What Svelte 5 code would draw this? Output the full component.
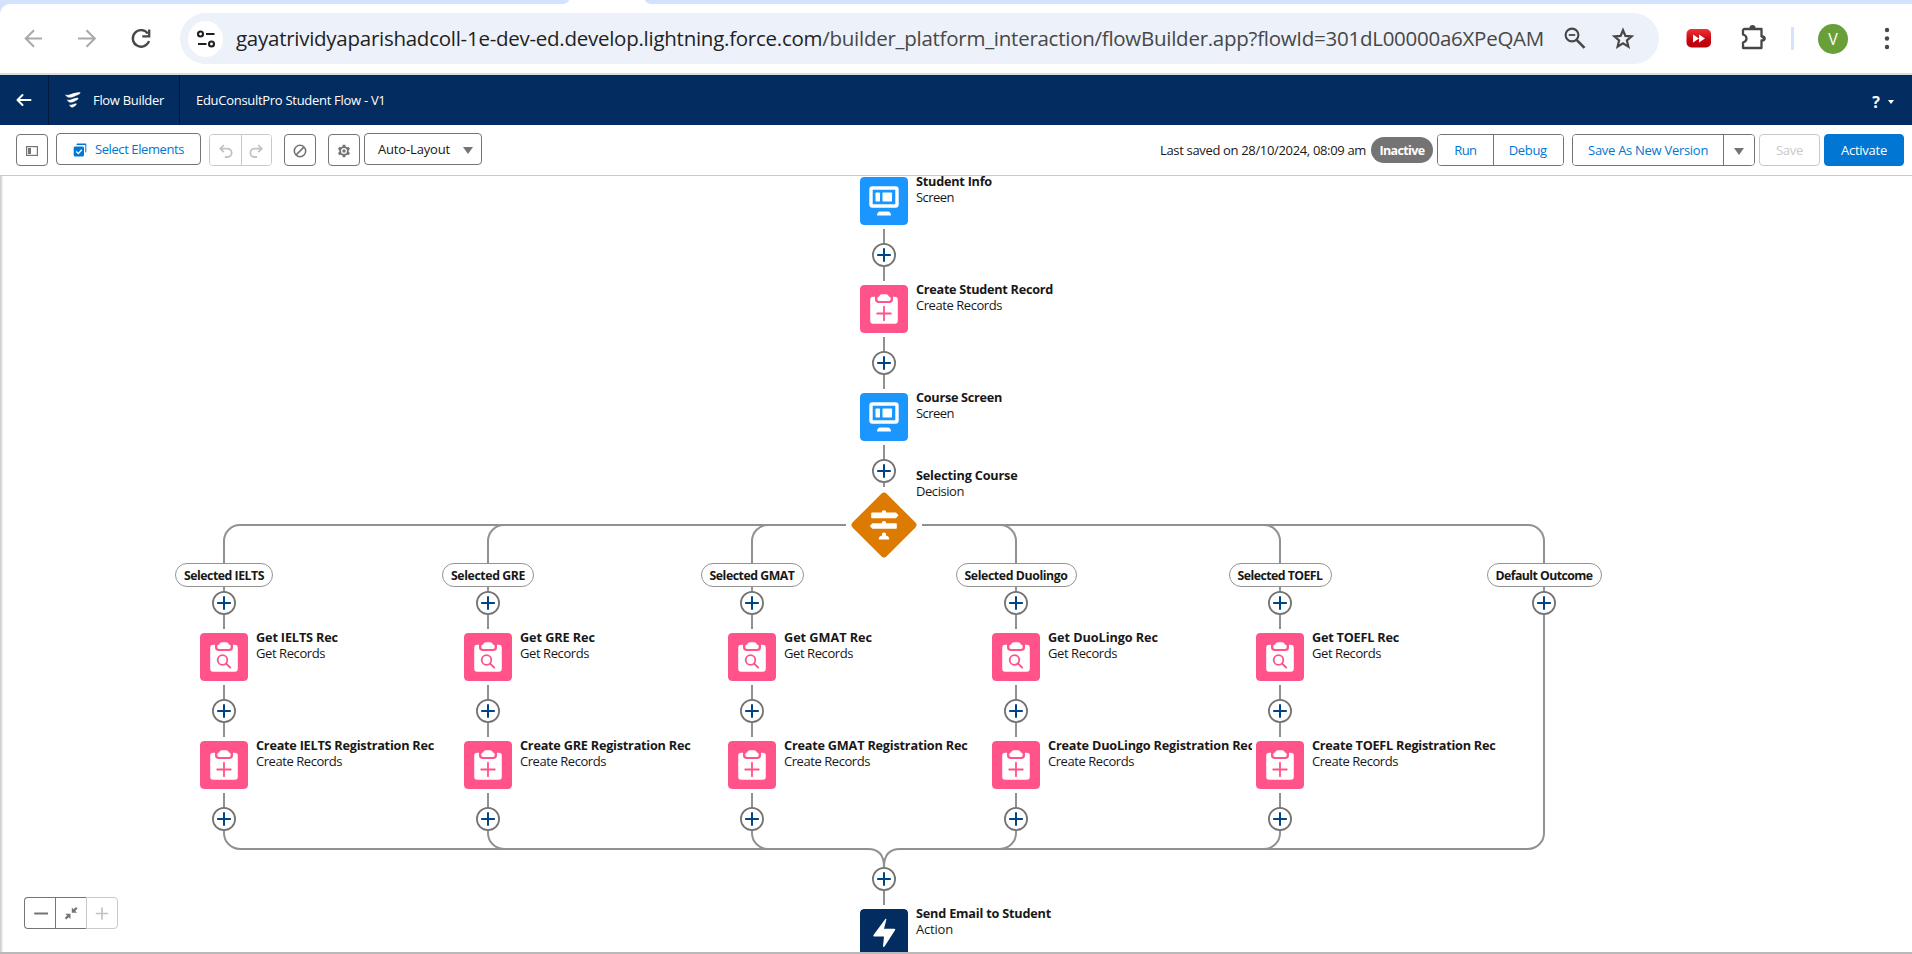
<script>
  // Spreads a label's letters so that it fills a set width in pixels.
  function fit(el, width) {
    const n = el.textContent.length;
    const natural = el.getBoundingClientRect().width;
    el.style.letterSpacing = `${(width - natural) / n}px`;
  }

  const trunk = [
    { x: 884, y: 177, kind: 'screen', title: 'Student Info', tw: 76, sub: 'Screen', sw: 38 },
    { x: 884, y: 285, kind: 'create', title: 'Create Student Record', tw: 137, sub: 'Create Records', sw: 86 },
    { x: 884, y: 393, kind: 'screen', title: 'Course Screen', tw: 86, sub: 'Screen', sw: 38 },
    { x: 884, y: 909, kind: 'action', title: 'Send Email to Student', tw: 135, sub: 'Action', sw: 37 }
  ];

  const branches = [
    { x: 224, label: 'Selected IELTS', w: 98, lw: 80, get: 'Get IELTS Rec', gw: 82, create: 'Create IELTS Registration Rec', cw: 178 },
    { x: 488, label: 'Selected GRE', w: 92, lw: 74, get: 'Get GRE Rec', gw: 75, create: 'Create GRE Registration Rec', cw: 170.5 },
    { x: 752, label: 'Selected GMAT', w: 103, lw: 85, get: 'Get GMAT Rec', gw: 88, create: 'Create GMAT Registration Rec', cw: 183.5 },
    { x: 1016, label: 'Selected Duolingo', w: 121, lw: 103, get: 'Get DuoLingo Rec', gw: 110, create: 'Create DuoLingo Registration Rec', cw: 206 },
    { x: 1280, label: 'Selected TOEFL', w: 103, lw: 85, get: 'Get TOEFL Rec', gw: 87, create: 'Create TOEFL Registration Rec', cw: 183.5 },
    { x: 1544, label: 'Default Outcome', w: 115, lw: 97 }
  ];

  const nodes = [
    ...trunk,
    ...branches.filter((b) => b.get).flatMap((b) => [
      { x: b.x, y: 633, kind: 'get', title: b.get, tw: b.gw, sub: 'Get Records', sw: 69 },
      { x: b.x, y: 741, kind: 'create', title: b.create, tw: b.cw, sub: 'Create Records', sw: 86 }
    ])
  ];

  const adders = [
    [884, 255], [884, 363], [884, 471], [884, 879],
    ...branches.flatMap((b) => (b.get ? [[b.x, 603], [b.x, 711], [b.x, 819]] : [[b.x, 603]]))
  ];

  const edges = [
    'M884 229V281', 'M884 337V389', 'M884 445V487', 'M884 879V905',
    'M846 525H240', 'M922 525H1528', 'M240 849H868', 'M900 849H1528',
    'M868 849Q884 849 884 867', 'M900 849Q884 849 884 867',
    ...branches.flatMap((b) => {
      const s = b.x < 884 ? 16 : -16;
      const sweep = s > 0 ? 0 : 1;
      const top = `M${b.x + s} 525A16 16 0 0 ${sweep} ${b.x} 541V${b.get ? 629 : 833}`;
      const end = `A16 16 0 0 ${sweep} ${b.x + s} 849`;
      return b.get
        ? [top, `M${b.x} 685V737`, `M${b.x} 793V833${end}`]
        : [top + end];
    })
  ];
</script>

<div class="page">
  <div class="tabs"><span class="strip left"></span><span class="strip right"></span></div>
  <header class="chrome">
    <svg class="nav" width="180" height="69" viewBox="0 4 180 69" fill="none">
      <g stroke="#a9a9a9" stroke-width="2">
        <path d="M42 38.500H26M34 30.200L25.700 38.500L34 46.800" />
        <path d="M78 38.500H94M86.500 30.200L94.800 38.500L86.500 46.800" />
      </g>
      <path d="M147.800 33.500A8.300 8.300 0 1 0 149 41M149.200 29.500V36.300H142.300" stroke="#474747" stroke-width="2.300" />
    </svg>
    <div class="omnibox">
      <span class="site">
        <svg width="20" height="18" viewBox="0 0 20 18" fill="none" stroke="#1f1f1f" stroke-width="2.100">
          <circle cx="4.500" cy="4" r="2.500" /><path d="M10 4H18.500M2 14H10.500" /><circle cx="15.500" cy="14" r="2.500" />
        </svg>
      </span>
      <span class="url" use:fit={1308}><b>gayatrividyaparishadcoll-1e-dev-ed.develop.lightning.force.com</b>/builder_platform_interaction/flowBuilder.app?flowId=301dL00000a6XPeQAM</span>
      <svg class="omni-icons" width="96" height="51" viewBox="1555 13 96 51" fill="none" stroke="#474747">
        <circle cx="1572" cy="35" r="6.400" stroke-width="2.100" /><path d="M1576.600 39.800L1584.500 47.800" stroke-width="2.600" /><path d="M1568.800 35H1575.200" stroke-width="1.800" />
        <path d="M1623 30.200L1625.400 35.900L1631.600 36.400L1626.900 40.500L1628.400 46.600L1623 43.300L1617.600 46.600L1619.100 40.500L1614.400 36.400L1620.600 35.900Z" stroke-width="2.200" />
      </svg>
    </div>
    <svg class="ext" width="253" height="69" viewBox="1659 4 253 69">
      <defs><linearGradient id="red" x1="0" y1="0" x2="0" y2="1"><stop offset="0" stop-color="#ee3338" /><stop offset=".6" stop-color="#c8040e" /><stop offset="1" stop-color="#b8000a" /></linearGradient></defs>
      <rect x="1686.500" y="29" width="24.500" height="18.500" rx="5" fill="url(#red)" />
      <path d="M1693 34.500L1699 38.500L1693 42.500ZM1699 34.500L1705 38.500L1699 42.500Z" fill="#fff" />
      <path d="M1744 29H1761.500V36.500Q1764.500 36.500 1764.500 38.500Q1764.500 40.500 1761.500 40.500V48H1743V42.500Q1746.500 41.500 1746.500 38.500Q1746.500 35.500 1743 34.500V30Z" fill="none" stroke="#474747" stroke-width="2.300" stroke-linejoin="round" />
      <path d="M1749.500 28A3 3 0 0 1 1755.500 28ZM1762.500 35.500A3 3 0 0 1 1762.500 41.500Z" fill="#474747" />
      <rect x="1791" y="27" width="3" height="23" rx="1" fill="#d3e3fd" />
      <circle cx="1833" cy="39" r="15" fill="#689f38" />
      <text x="1833" y="44.500" text-anchor="middle" font-size="16" fill="#fff">V</text>
      <circle cx="1887" cy="30" r="2.200" fill="#474747" /><circle cx="1887" cy="38.500" r="2.200" fill="#474747" /><circle cx="1887" cy="47" r="2.200" fill="#474747" />
    </svg>
  </header>

  <div class="brand">
    <div class="cell back">
      <svg width="16" height="14" viewBox="0 0 16 14" fill="none" stroke="#fff" stroke-width="2" stroke-linecap="round" stroke-linejoin="round"><path d="M14.500 7H2M6.500 2L1.500 7L6.500 12" /></svg>
    </div>
    <div class="cell app">
      <svg width="16" height="16" viewBox="0 0 16 16" fill="#fff" stroke="#fff" stroke-width=".5" stroke-linejoin="round">
        <path d="M.5 2.800C4 4.800 7 .6 15.200.6C14.600 2.900 12.500 2.700 10 3.900C6.500 5.600 2.500 6.400.5 2.800Z" />
        <path d="M2.300 7.900C5.500 9.300 7.500 6.200 13.200 6.100C12.800 8.200 11 8.400 9.500 9.200C6.800 10.700 3.800 11 2.300 7.900Z" />
        <path d="M4.600 12.900C6.500 13.900 7.800 11.800 11.400 11.800C11 13.600 10 13.800 9 14.500C7.300 15.600 5.500 15.400 4.600 12.900Z" />
      </svg>
      <span use:fit={71}>Flow Builder</span>
    </div>
    <div class="flowname"><span use:fit={189.5}>EduConsultPro Student Flow - V1</span></div>
    <div class="help"><span class="q">?</span><i></i></div>
  </div>

  <div class="toolbar">
    <button class="btn icon" aria-label="Toggle toolbox">
      <svg width="12" height="10" viewBox="0 0 12 10"><rect x=".6" y=".6" width="10.800" height="8.800" fill="none" stroke="#747474" stroke-width="1.200" /><rect x="2" y="2" width="3" height="6" fill="#747474" /></svg>
    </button>
    <button class="btn select">
      <svg width="14" height="14" viewBox="0 0 14 14"><path d="M3.500 2V1.500Q3.500.5 4.500.5H12.300Q13.300.5 13.300 1.500V8.500Q13.300 9.500 12.300 9.500V2H3.500Z" fill="#0176d3" /><rect x=".7" y="3.500" width="10.300" height="10" rx="1.500" fill="#0176d3" /><path d="M3.200 8.600L5.300 10.600L8.800 6.800" fill="none" stroke="#fff" stroke-width="1.400" /></svg>
      <span use:fit={89}>Select Elements</span>
    </button>
    <div class="group dim">
      <button aria-label="Undo"><svg width="14" height="14" viewBox="0 0 14 14" fill="none" stroke="#c2c2c2" stroke-width="1.800"><path d="M4.800 1L1.300 4.700L4.800 8.200M1.500 4.700H8.500A4 4 0 0 1 8.500 13H6" /></svg></button>
      <button aria-label="Redo"><svg width="14" height="14" viewBox="0 0 14 14" fill="none" stroke="#c2c2c2" stroke-width="1.800"><path d="M9.200 1L12.700 4.700L9.200 8.200M12.500 4.700H5.500A4 4 0 0 0 5.500 13H8" /></svg></button>
    </div>
    <button class="btn icon ban" aria-label="Clear">
      <svg width="14" height="14" viewBox="0 0 14 14" fill="none" stroke="#747474" stroke-width="1.600"><circle cx="7" cy="7" r="5.700" /><path d="M3.100 10.900L10.900 3.100" /></svg>
    </button>
    <button class="btn icon gear" aria-label="Settings">
      <svg width="14" height="14" viewBox="0 0 14 14" fill="none" stroke="#747474"><circle cx="7" cy="7" r="3.900" stroke-width="1.900" /><circle cx="7" cy="7" r="1.700" fill="#747474" stroke="none" /><path d="M7 .8V3M7 11V13.200M1.630 3.900L3.500 5M10.500 9L12.370 10.100M1.630 10.100L3.500 9M10.500 5L12.370 3.900" stroke-width="2.700" /></svg>
    </button>
    <button class="btn layout"><span use:fit={72}>Auto-Layout</span><i class="tri"></i></button>

    <span class="saved"><span use:fit={206}>Last saved on 28/10/2024, 08:09 am</span></span>
    <span class="pill"><span use:fit={45}>Inactive</span></span>
    <div class="group run"><button><span use:fit={22}>Run</span></button><button><span use:fit={38}>Debug</span></button></div>
    <div class="group saveas"><button><span use:fit={120}>Save As New Version</span></button><button aria-label="More save options"><i class="tri"></i></button></div>
    <button class="btn save"><span use:fit={27}>Save</span></button>
    <button class="btn activate"><span use:fit={46}>Activate</span></button>
  </div>

  <main class="canvas">
    <svg class="edges" width="1912" height="776" viewBox="0 176 1912 776" fill="none">
      {#each edges as d}<path {d} stroke="#919191" stroke-width="2" />{/each}
      {#each adders as [x, y]}
        <circle cx={x} cy={y} r="11.100" fill="#fff" stroke="#747474" stroke-width="1.800" />
        <path d="M{x - 6.8} {y}H{x + 6.8}M{x} {y - 6.8}V{y + 6.8}" stroke="#014486" stroke-width="2" />
      {/each}
      <rect x="860" y="501" width="48" height="48" rx="3.800" fill="#dd7a01" transform="rotate(45 884 525)" />
      <g fill="#fff">
        <path d="M872 512.500H882V511.200Q884 509.200 886 511.200V512.500H896L898.500 515.300L896 518.200H872Q871.200 518.200 871.200 517.400V513.300Q871.200 512.500 872 512.500Z" />
        <path d="M872.400 523.200H882V522Q884 520 886 522V523.200H896Q896.800 523.200 896.800 524V528Q896.800 528.800 896 528.800H872.400L869.800 526Z" />
        <path d="M882 533.500Q884 531.500 886 533.500V535.500Q888.800 536 889.300 538.600Q889.300 539.500 888.500 539.500H879.500Q878.700 539.500 878.700 538.600Q879.200 536 882 535.500Z" />
      </g>
    </svg>

    {#each branches as b}
      <div class="outcome" style="left:{b.x - b.w / 2}px;width:{b.w}px"><span use:fit={b.lw}>{b.label}</span></div>
    {/each}

    <div class="label"><strong use:fit={101.5}>Selecting Course</strong><span use:fit={48}>Decision</span></div>

    {#each nodes as n}
      <div class="node" style="left:{n.x - 24}px;top:{n.y - 176}px">
        <svg class="tile {n.kind}" width="48" height="48" viewBox="0 0 48 48">
          {#if n.kind === 'screen'}
            <rect x="11" y="11" width="26" height="18" rx="1.500" fill="none" stroke="#fff" stroke-width="3.400" />
            <rect x="15.500" y="15.500" width="4.500" height="9" rx=".7" fill="#fff" /><rect x="22.500" y="15.500" width="9.500" height="9" rx=".7" fill="#fff" />
            <path d="M17 38Q17.500 34.500 20 34.500H28Q30.500 34.500 31 38Q31 38.500 30.500 38.500H17.500Q17 38.500 17 38Z" fill="#fff" />
          {:else if n.kind === 'action'}
            <path d="M25.500 9.800Q26.600 9.500 26.400 10.500L24 19.800H34.500Q35.800 20 35 21.200L24.500 37.500Q23.300 38.700 23 37.200L24 27.500H14Q12.800 27.300 13.500 26Z" fill="#fff" />
          {:else}
            <rect x="10.200" y="11.800" width="27.600" height="27" rx="3" fill="#fff" />
            <path d="M15 11V14.200Q15 18 18.800 18H29.200Q33 18 33 14.200V11Z" class="notch" />
            <path d="M17.200 13.800Q17.200 12 19 11.500Q20 9.200 22 9.200H26Q28 9.200 29 11.500Q30.800 12 30.800 13.800Q30.800 16 28.800 16H19.200Q17.200 16 17.200 13.800Z" fill="#fff" />
            {#if n.kind === 'create'}
              <path d="M24 21.700V35.300M17.200 28.500H30.800" fill="none" stroke="#ff538a" stroke-width="1.800" stroke-linecap="round" />
            {:else}
              <circle cx="22.500" cy="27" r="4.800" fill="none" stroke="#ff538a" stroke-width="1.800" /><path d="M26 30.500L30.200 34.700" stroke="#ff538a" stroke-width="1.900" stroke-linecap="round" />
            {/if}
          {/if}
        </svg>
        <div class="text"><strong use:fit={n.tw}>{n.title}</strong><span use:fit={n.sw}>{n.sub}</span></div>
      </div>
    {/each}

    <div class="zoom">
      <button aria-label="Zoom out"><svg width="14" height="14" viewBox="0 0 14 14"><path d="M1 7.500H13.500" stroke="#747474" stroke-width="2" stroke-linecap="round" /></svg></button>
      <button aria-label="Fit"><svg width="14" height="14" viewBox="0 0 14 14" fill="#747474"><path d="M7.800 1.500V6.700H13L11.200 4.900L13.500 2.500L12 1L9.600 3.300ZM6.500 13V7.800H1.300L3.100 9.600L.8 12L2.200 13.500L4.700 11.200Z" /></svg></button>
      <button class="off" aria-label="Zoom in"><svg width="14" height="14" viewBox="0 0 14 14"><path d="M1.500 7.500H12.500M7 2V13" stroke="#c2c2c2" stroke-width="1.700" stroke-linecap="round" /></svg></button>
    </div>
  </main>
  <div class="foot"></div>
</div>

<style>
  :global(body) { background: #fff; }
  .page { width: 1912px; height: 954px; overflow: hidden; display: flex; flex-direction: column; font-family: "Open Sans", "Noto Sans", sans-serif; font-size: 13px; color: #181818; }
  .page * { box-sizing: border-box; }
  span, strong { white-space: nowrap; }
  button { font: inherit; color: inherit; background: #fff; padding: 0; margin: 0; border: 0; display: flex; align-items: center; justify-content: center; }

  .tabs { height: 4px; flex: none; display: flex; gap: 76px; background: #fff; }
  .strip { background: #d3e3fd; }
  .strip.left { width: 569px; border-bottom-right-radius: 7px 4px; }
  .strip.right { flex: 1; border-bottom-left-radius: 7px 4px; }
  .chrome { height: 71px; flex: none; display: flex; background: linear-gradient(135deg, #d3e3fd 8px, #fff 8px); border-bottom: 2px solid #dedede; }
  .chrome svg { display: block; flex: none; }
  .nav { background: #fff; border-top-left-radius: 10px; }
  .omnibox { width: 1479px; height: 51px; margin-top: 9px; border-radius: 26px; background: #ecf1fa; display: flex; align-items: center; padding-left: 8px; }
  .site { width: 35px; height: 36px; border-radius: 50%; background: #fff; display: flex; align-items: center; justify-content: center; margin-right: 13px; }
  .url { font-size: 20.500px; color: #474747; line-height: 51px; }
  .url b { font-weight: 400; color: #1f1f1f; }
  .omni-icons { margin-left: 11px; }

  .brand { height: 50px; flex: none; background: #032d60; color: #fff; display: flex; align-items: center; }
  .cell { height: 50px; display: flex; align-items: center; border-right: 1px solid #011a3c; }
  .back { width: 49px; padding-left: 16px; }
  .app { width: 131px; padding-left: 16px; }
  .app span { margin-left: 12px; }
  .flowname { padding-left: 16px; }
  .help { margin-left: auto; display: flex; align-items: center; gap: 8px; margin-right: 18px; padding-top: 3px; }
  .q { font-size: 16px; font-weight: 700; line-height: 20px; }
  .help i { border: 3px solid transparent; border-top: 4px solid #fff; border-bottom: 0; }

  .toolbar { height: 51px; flex: none; display: flex; align-items: center; padding: 0 8px 0 16px; border-bottom: 1px solid #c9c9c9; color: #0176d3; }
  .btn { height: 32px; border: 1px solid #747474; border-radius: 4px; }
  .icon { width: 32px; }
  .icon svg, .dim svg { margin-top: 2px; }
  .select { width: 145px; margin: 0 8px 2px; gap: 8px; }
  .select svg { margin-top: 2px; }
  .group { height: 32px; display: flex; border: 1px solid #747474; border-radius: 4px; overflow: hidden; }
  .group button + button { border-left: 1px solid #747474; }
  .group.dim { border-color: #c9c9c9; width: 63px; }
  .group.dim button { width: 31px; padding-left: 1px; }
  .group.dim button + button { border-color: #c9c9c9; padding-left: 0; }
  .ban { margin: 0 12px; }
  .layout { width: 118px; margin: 0 0 2px 4px; color: #181818; justify-content: space-between; padding: 0 8px 0 13px; }
  .tri { border: 5.500px solid transparent; border-top: 7px solid #747474; border-bottom: 0; margin-top: 3px; }
  .saved { margin-left: auto; color: #181818; }
  .pill { width: 62px; height: 26px; border-radius: 13px; background: #747474; color: #fff; font-weight: 700; font-size: 12.500px; display: flex; align-items: center; justify-content: center; margin: 0 4px 0 5px; }
  .run { width: 127px; }
  .run button { width: 55px; }
  .run button + button { width: 71px; padding-right: 1px; }
  .saveas { width: 183px; margin: 0 4px 0 8px; }
  .saveas button { width: 151px; }
  .saveas button + button { width: 31px; }
  .save { width: 61px; border-color: #c9c9c9; color: #c9c9c9; margin-right: 4px; }
  .activate { width: 80px; border-color: #0176d3; background: #0176d3; color: #fff; }

  .canvas { flex: 1; position: relative; overflow: hidden; background: #fff; box-shadow: inset 3px 0 2px -1px #d0d0d0; }
  .edges { display: block; }
  strong { font-size: 12.700px; }
  .outcome { position: absolute; top: 387px; height: 24px; border: 1px solid #939393; border-radius: 12px; background: #fff; display: flex; align-items: center; justify-content: center; font-weight: 700; font-size: 12.300px; }
  .node { position: absolute; display: flex; gap: 8px; }
  .tile { border-radius: 4px; flex: none; position: relative; outline: 4px solid #fff; }
  .screen { background: #1b96ff; }
  .create, .get { background: #ff538a; }
  .action { background: #032d60; }
  .notch { fill: #ff538a; }
  .text { display: flex; flex-direction: column; align-items: flex-start; line-height: 16px; margin-top: -4px; }
  .label { position: absolute; left: 916px; top: 291px; display: flex; flex-direction: column; align-items: flex-start; line-height: 16px; }
  .zoom { position: absolute; left: 24px; top: 721px; display: flex; }
  .zoom button { width: 31px; height: 32px; border: 1px solid #747474; border-right: 0; }
  .zoom button:first-child { border-radius: 4px 0 0 4px; padding-left: 1px; }
  .zoom .off { width: 32px; border: 1px solid #c9c9c9; border-radius: 0 4px 4px 0; }
  .foot { height: 2px; flex: none; background: #b9b9bc; }
</style>
